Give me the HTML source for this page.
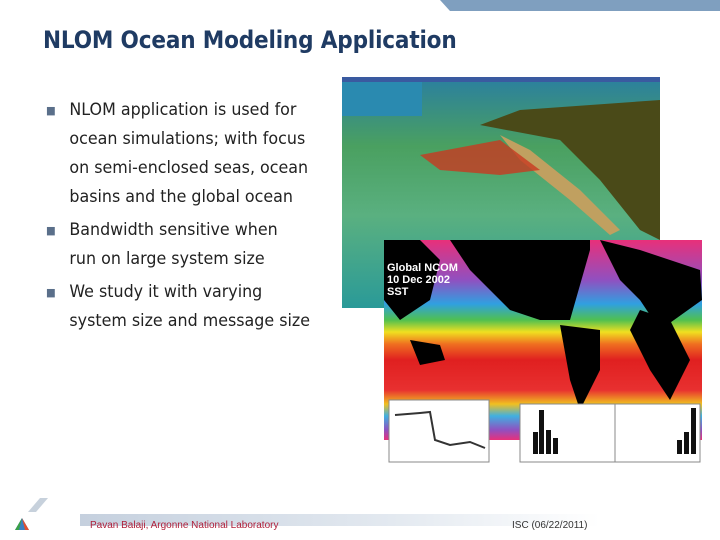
<!DOCTYPE html>
<html><head><style>
body{margin:0;width:720px;height:540px;background:#fff;position:relative;overflow:hidden;font-family:"Liberation Sans",sans-serif}
.t{position:absolute;left:43px;top:26px;font-size:24px;color:#1f3b63;font-weight:bold;letter-spacing:-0.2px;font-family:"DejaVu Sans",sans-serif;transform:scaleX(0.9);transform-origin:left}
.b{position:absolute;left:46px;font-size:17px;color:#222;line-height:29px;font-family:"DejaVu Sans",sans-serif;transform:scaleX(0.935);transform-origin:left}
.b span.m{position:absolute;left:0;font-size:11px;color:#5a6f8a}
.b div{margin-left:25px}
</style></head><body>
<svg style="position:absolute;left:0;top:0" width="720" height="540">
<polygon points="440,0 720,0 720,11 450,11" fill="#7f9fbf"/>
<defs>
<linearGradient id="f" x1="0" x2="1"><stop offset="0" stop-color="#c5d0de"/><stop offset="0.6" stop-color="#e3e9f0"/><stop offset="1" stop-color="#fff"/></linearGradient>
<linearGradient id="sea" x1="0" y1="0" x2="0" y2="1"><stop offset="0" stop-color="#2a7fa0"/><stop offset="0.3" stop-color="#4aa060"/><stop offset="0.6" stop-color="#5ab080"/><stop offset="1" stop-color="#2a9a98"/></linearGradient>
<linearGradient id="sst" x1="0" y1="0" x2="0" y2="1"><stop offset="0" stop-color="#e8307a"/><stop offset="0.2" stop-color="#9050c0"/><stop offset="0.32" stop-color="#30a0e0"/><stop offset="0.4" stop-color="#50c050"/><stop offset="0.46" stop-color="#f0e020"/><stop offset="0.52" stop-color="#f07020"/><stop offset="0.6" stop-color="#e02020"/><stop offset="0.75" stop-color="#e83030"/><stop offset="0.82" stop-color="#f0c020"/><stop offset="0.88" stop-color="#40b0e0"/><stop offset="0.95" stop-color="#9050c0"/><stop offset="1" stop-color="#e8307a"/></linearGradient>
</defs>
<rect x="342" y="77" width="318" height="231" fill="url(#sea)"/>
<rect x="342" y="77" width="318" height="5" fill="#3a5aa0"/>
<rect x="342" y="82" width="80" height="34" fill="#2a8ab0"/>
<polygon points="480,125 520,110 660,100 660,240 640,230 600,180 560,140" fill="#4a4a18"/>
<polygon points="500,135 530,150 580,190 620,230 610,235 570,200 520,160" fill="#c0a060"/>
<polygon points="420,155 500,140 540,170 500,175 440,170" fill="#c83a20" opacity="0.8"/>
<rect x="384" y="240" width="318" height="200" fill="url(#sst)"/>
<polygon points="450,240 470,270 510,310 540,320 570,320 590,250 590,240" fill="#000"/>
<polygon points="384,300 384,240 420,240 440,260 430,300 400,320" fill="#000"/>
<polygon points="600,240 640,250 670,260 700,270 702,300 660,330 640,300 620,280" fill="#000"/>
<polygon points="640,310 670,320 690,360 670,400 650,370 630,330" fill="#000"/>
<polygon points="560,325 600,330 600,370 580,410 570,380" fill="#000"/>
<polygon points="410,340 440,345 445,360 420,365" fill="#000"/>
<rect x="389" y="400" width="100" height="62" fill="#fff" stroke="#888"/>
<rect x="520" y="404" width="95" height="58" fill="#fff" stroke="#888"/>
<rect x="615" y="404" width="85" height="58" fill="#fff" stroke="#888"/>
<polyline points="395,415 420,413 430,412 435,440 450,445 470,442 485,448" fill="none" stroke="#333" stroke-width="2"/>
<g fill="#111"><rect x="533" y="432" width="5" height="22"/><rect x="539" y="410" width="5" height="44"/><rect x="546" y="430" width="5" height="24"/><rect x="553" y="438" width="5" height="16"/><rect x="691" y="408" width="5" height="46"/><rect x="684" y="432" width="5" height="22"/><rect x="677" y="440" width="5" height="14"/></g>
<rect x="80" y="514" width="520" height="12" fill="url(#f)"/>
<polygon points="28,512 40,498 48,498 36,512" fill="#c7d1dc"/>
<polygon points="15,530 22,518 29,530" fill="#3a7fc0"/>
<polygon points="15,530 22,518 19,530" fill="#3aa048"/>
<polygon points="22,518 29,530 25,530" fill="#e05030"/>
</svg>
<div style="position:absolute;left:387px;top:262px;color:#fff;font-weight:bold;font-size:11px;line-height:12px">Global NCOM<br>10 Dec 2002<br>SST</div>
<div class="t">NLOM Ocean Modeling Application</div>
<div class="b" style="top:96px"><span class="m">■</span><div>NLOM application is used for<br>ocean simulations; with focus<br>on semi-enclosed seas, ocean<br>basins and the global ocean</div></div>
<div class="b" style="top:216px"><span class="m">■</span><div>Bandwidth sensitive when<br>run on large system size</div></div>
<div class="b" style="top:278px"><span class="m">■</span><div>We study it with varying<br>system size and message size</div></div>
<div style="position:absolute;left:90px;top:520px;font-size:10px;color:#b0203a">Pavan Balaji, Argonne National Laboratory</div>
<div style="position:absolute;left:512px;top:520px;font-size:10px;color:#333">ISC (06/22/2011)</div>
</body></html>
